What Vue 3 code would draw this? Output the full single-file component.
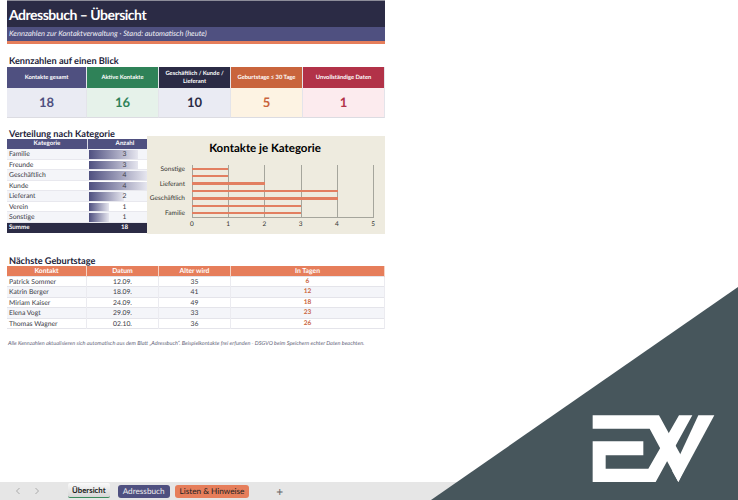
<template>
  <div class="page">
    <div class="sheet">
      <div class="top-rule"></div>
      <div class="title">Adressbuch – Übersicht</div>
      <div class="subtitle">Kennzahlen zur Kontaktverwaltung · Stand: automatisch (heute)</div>
      <div class="accent"></div>

      <h2 class="heading kpi-heading">Kennzahlen auf einen Blick</h2>
      <div class="kpis">
        <div v-for="k in kpis" :key="k.label" class="kpi">
          <div class="kpi-label" :style="{ background: k.color }">{{ k.label }}</div>
          <div class="kpi-value" :style="{ background: k.bg, color: k.text }">{{ k.value }}</div>
        </div>
      </div>

      <div class="middle">
        <div class="dist">
          <h2 class="heading">Verteilung nach Kategorie</h2>
          <div class="dist-table">
            <div class="dist-head">
              <span>Kategorie</span>
              <span class="dist-head-count">Anzahl</span>
            </div>
            <div v-for="(c, i) in categories" :key="c.name" class="dist-row" :class="{ striped: i % 2 === 0 }">
              <span class="dist-name">{{ c.name }}</span>
              <span class="dist-count">
                <i class="databar" :style="{ width: 5.5 + c.count * 14.5 + 'px' }"></i>
                <b>{{ c.count }}</b>
              </span>
            </div>
            <div class="dist-sum">
              <span>Summe</span>
              <span>18</span>
            </div>
          </div>
        </div>

        <div class="chart">
          <div class="chart-title">Kontakte je Kategorie</div>
          <div class="chart-body">
            <div class="y-labels">
              <span v-for="l in yLabels" :key="l">{{ l }}</span>
            </div>
            <div class="plot">
              <div class="gridlines">
                <i v-for="n in 6" :key="n"></i>
              </div>
              <div class="bars">
                <div v-for="(v, i) in chartValues" :key="i" class="bar" :style="{ width: v * 20 + '%' }"></div>
              </div>
            </div>
          </div>
          <div class="x-labels">
            <span v-for="n in 6" :key="n">{{ n - 1 }}</span>
          </div>
        </div>
      </div>

      <h2 class="heading bday-heading">Nächste Geburtstage</h2>
      <div class="bday">
        <div class="bday-row bday-head">
          <span>Kontakt</span>
          <span>Datum</span>
          <span>Alter wird</span>
          <span>In Tagen</span>
        </div>
        <div v-for="(b, i) in birthdays" :key="b.name" class="bday-row" :class="{ striped: i % 2 === 1 }">
          <span class="bday-name">{{ b.name }}</span>
          <span>{{ b.date }}</span>
          <span>{{ b.age }}</span>
          <span class="days">{{ b.days }}</span>
        </div>
      </div>

      <p class="note">Alle Kennzahlen aktualisieren sich automatisch aus dem Blatt „Adressbuch“. Beispielkontakte frei erfunden - DSGVO beim Speichern echter Daten beachten.</p>
    </div>

    <div class="tabbar">
      <svg class="nav" viewBox="0 0 6 8" width="6" height="8"><path d="M4.5 1 1.5 4l3 3" /></svg>
      <svg class="nav nav-next" viewBox="0 0 6 8" width="6" height="8"><path d="M1.5 1l3 3-3 3" /></svg>
      <span class="tab tab-active">Übersicht</span>
      <span class="tab tab-blue">Adressbuch</span>
      <span class="tab tab-orange">Listen &amp; Hinweise</span>
      <span class="plus">+</span>
    </div>

    <div class="corner"></div>
    <svg class="logo" viewBox="0 0 420 240" width="140" height="80">
      <path fill="#fff" d="M23 22H222L304 172 280 222 194 62H23Z" />
      <path fill="#fff" d="M282 22H322L212 222H23V100H175V142H62V182H190Z" />
      <path fill="#fff" d="M340 22H388L280 222 262 190Z" />
    </svg>
  </div>
</template>

<script setup>
const kpis = [
  { label: 'Kontakte gesamt', value: 18, color: '#4f5080', bg: '#eaebf3', text: '#4f5080' },
  { label: 'Aktive Kontakte', value: 16, color: '#2f8258', bg: '#e6f2ea', text: '#2f8258' },
  { label: 'Geschäftlich / Kunde / Lieferant', value: 10, color: '#2b2b45', bg: '#eaebf3', text: '#2b2b45' },
  { label: 'Geburtstage ≤ 30 Tage', value: 5, color: '#c9643c', bg: '#fdf3e3', text: '#c9643c' },
  { label: 'Unvollständige Daten', value: 1, color: '#b23248', bg: '#fcebee', text: '#b23248' }
]

const categories = [
  { name: 'Familie', count: 3 },
  { name: 'Freunde', count: 3 },
  { name: 'Geschäftlich', count: 4 },
  { name: 'Kunde', count: 4 },
  { name: 'Lieferant', count: 2 },
  { name: 'Verein', count: 1 },
  { name: 'Sonstige', count: 1 }
]

const yLabels = ['Sonstige', 'Lieferant', 'Geschäftlich', 'Familie']
const chartValues = [1, 1, 2, 4, 4, 3, 3]

const birthdays = [
  { name: 'Patrick Sommer', date: '12.09.', age: 35, days: 6 },
  { name: 'Katrin Berger', date: '18.09.', age: 41, days: 12 },
  { name: 'Miriam Kaiser', date: '24.09.', age: 49, days: 18 },
  { name: 'Elena Vogt', date: '29.09.', age: 33, days: 23 },
  { name: 'Thomas Wagner', date: '02.10.', age: 36, days: 26 }
]
</script>

<style scoped>
.page {
  position: relative;
  width: 738px;
  height: 500px;
  overflow: hidden;
  background: #fff;
  font-family: Lato, "Liberation Sans", sans-serif;
  text-rendering: geometricPrecision;
  color: #2b2b3a;
  display: flex;
  flex-direction: column;
}

.sheet {
  width: 378px;
  margin-left: 7px;
  flex: 1;
}

.top-rule {
  height: 1px;
  background: #8d8d99;
}

.title {
  height: 26px;
  line-height: 27px;
  padding-left: 2px;
  background: #2b2b45;
  color: #fff;
  font-size: 14px;
  font-weight: 700;
  letter-spacing: -0.5px;
}

.subtitle {
  height: 14px;
  line-height: 14px;
  padding-left: 2px;
  background: #4f5080;
  color: #f1f1f6;
  font-size: 7.5px;
  font-style: italic;
}

.accent {
  height: 3px;
  background: #e67e5b;
}

.heading {
  margin: 0;
  font-size: 9.2px;
  font-weight: 700;
  line-height: 11px;
  color: #23233a;
  padding-left: 2px;
}

.kpi-heading {
  margin-top: 11px;
}

.kpis {
  display: grid;
  grid-template-columns: 80px 72px 72px 72px 82px;
  margin-top: 1px;
}

.kpi {
  display: flex;
  flex-direction: column;
}

.kpi-label {
  height: 21px;
  display: flex;
  align-items: center;
  justify-content: center;
  text-align: center;
  color: #fff;
  font-size: 5.8px;
  line-height: 8px;
  font-weight: 700;
  padding: 0 5px;
  border-right: 1px solid #e4e4ea;
}

.kpi-value {
  height: 29px;
  line-height: 29px;
  text-align: center;
  font-size: 13px;
  font-weight: 700;
  border-right: 1px solid #e4e4ea;
  border-bottom: 1px solid #dcdce2;
}

.middle {
  display: flex;
  margin-top: 10px;
}

.dist {
  width: 140px;
  flex-shrink: 0;
}

.dist-table {
  font-size: 6.8px;
}

.dist-head {
  display: grid;
  grid-template-columns: 80px 60px;
  height: 10px;
  line-height: 10px;
  background: #4f5080;
  color: #fff;
  font-weight: 700;
  text-align: center;
  font-size: 6.2px;
}

.dist-head-count {
  border-left: 1px solid #d9d9e4;
  padding-left: 15px;
}

.dist-row {
  display: grid;
  grid-template-columns: 80px 60px;
  height: 10.5px;
  line-height: 10.5px;
  border-bottom: 1px solid #e8e8ee;
  box-sizing: border-box;
  color: #3a3a45;
}

.striped {
  background: #f4f5f9;
}

.dist-name {
  padding-left: 2px;
}

.dist-count {
  position: relative;
  text-align: center;
  padding-left: 15px;
}

.dist-count b {
  position: relative;
  font-weight: 400;
}

.databar {
  position: absolute;
  left: 2px;
  top: 1px;
  bottom: 1px;
  max-width: 58px;
  background: linear-gradient(90deg, #4f5080, #e6e6ef);
}

.dist-sum {
  display: grid;
  grid-template-columns: 80px 60px;
  height: 10.5px;
  line-height: 10.5px;
  background: #2b2b45;
  color: #fff;
  font-weight: 700;
  font-size: 6.2px;
}

.dist-sum span:first-child {
  padding-left: 2px;
}

.dist-sum span:last-child {
  text-align: center;
  padding-left: 15px;
}

.chart {
  width: 238px;
  height: 98px;
  margin-top: 8px;
  background: #eeebdf;
  display: flex;
  flex-direction: column;
  box-sizing: border-box;
}

.chart-title {
  text-align: center;
  font-size: 11.5px;
  font-weight: 700;
  line-height: 12px;
  margin-top: 7px;
  padding-right: 2px;
  color: #000;
}

.chart-body {
  display: flex;
  height: 53px;
  margin-top: 10px;
}

.y-labels {
  width: 38px;
  flex-shrink: 0;
  font-size: 6.5px;
  text-align: right;
  color: #33332f;
  display: flex;
  flex-direction: column;
  justify-content: space-between;
  padding: 1px 0;
  box-sizing: border-box;
}

.plot {
  position: relative;
  margin-left: 7px;
  width: 182px;
  border-bottom: 1px solid #a5a59c;
}

.gridlines {
  position: absolute;
  inset: 0;
  display: flex;
  justify-content: space-between;
}

.gridlines i {
  width: 1px;
  background: #a5a59c;
}

.bars {
  position: relative;
  height: 100%;
  display: flex;
  flex-direction: column;
  justify-content: space-around;
}

.bar {
  height: 2.4px;
  background: #e27f61;
}

.x-labels {
  display: flex;
  justify-content: space-between;
  margin: 3px 0 0 43px;
  width: 185px;
  font-size: 6.5px;
  color: #33332f;
}

.bday-heading {
  margin-top: 21px;
}

.bday {
  font-size: 6.8px;
}

.bday-row {
  display: grid;
  grid-template-columns: 80px 72px 72px 154px;
  height: 10.5px;
  line-height: 10.5px;
  text-align: center;
  border-bottom: 1px solid #e4e4ea;
  box-sizing: border-box;
  color: #3a3a45;
}

.bday-row span {
  border-right: 1px solid #ebebf0;
}

.bday-head {
  background: #e67e5b;
  color: #fff;
  font-weight: 700;
}

.bday-head span {
  border-right: 1px solid #f6d3c4;
}

.bday-name {
  text-align: left;
  padding-left: 2px;
}

.days {
  color: #c9643c;
  font-weight: 700;
  font-size: 6.5px;
}

.note {
  margin: 12px 0 0 1px;
  font-size: 5.55px;
  font-style: italic;
  white-space: nowrap;
  color: #66667a;
}

.tabbar {
  height: 18px;
  flex-shrink: 0;
  background: #e6e6e6;
  display: flex;
  align-items: center;
  font-size: 8.2px;
  color: #222;
}

.nav {
  margin-left: 15px;
  fill: none;
  stroke: #9a9a9a;
  stroke-width: 0.8;
}

.nav-next {
  margin-left: 13px;
}

.tab {
  height: 13px;
  line-height: 13px;
  border-radius: 3px;
  padding: 0 5px;
  margin-left: 5px;
}

.tab-active {
  margin-left: 28px;
  height: 15px;
  line-height: 14px;
  box-sizing: border-box;
  margin-top: -2px;
  padding: 0 4px;
  background: linear-gradient(180deg, #fafafa, #d6d6d6);
  border-bottom: 1px solid #3a8a5c;
  border-radius: 2px;
  font-size: 7.8px;
  font-weight: 700;
  margin-right: 3px;
}

.tab-blue {
  background: #4f5080;
  color: #eee;
}

.tab-orange {
  background: #e67e5b;
}

.plus {
  margin-left: 27px;
  font-size: 12px;
  color: #666;
}

.corner {
  position: absolute;
  left: 431px;
  top: 287px;
  width: 307px;
  height: 213px;
  background: #47565c;
  clip-path: polygon(100% 0, 100% 100%, 0 100%);
}

.logo {
  position: absolute;
  left: 585px;
  top: 408px;
}
</style>
